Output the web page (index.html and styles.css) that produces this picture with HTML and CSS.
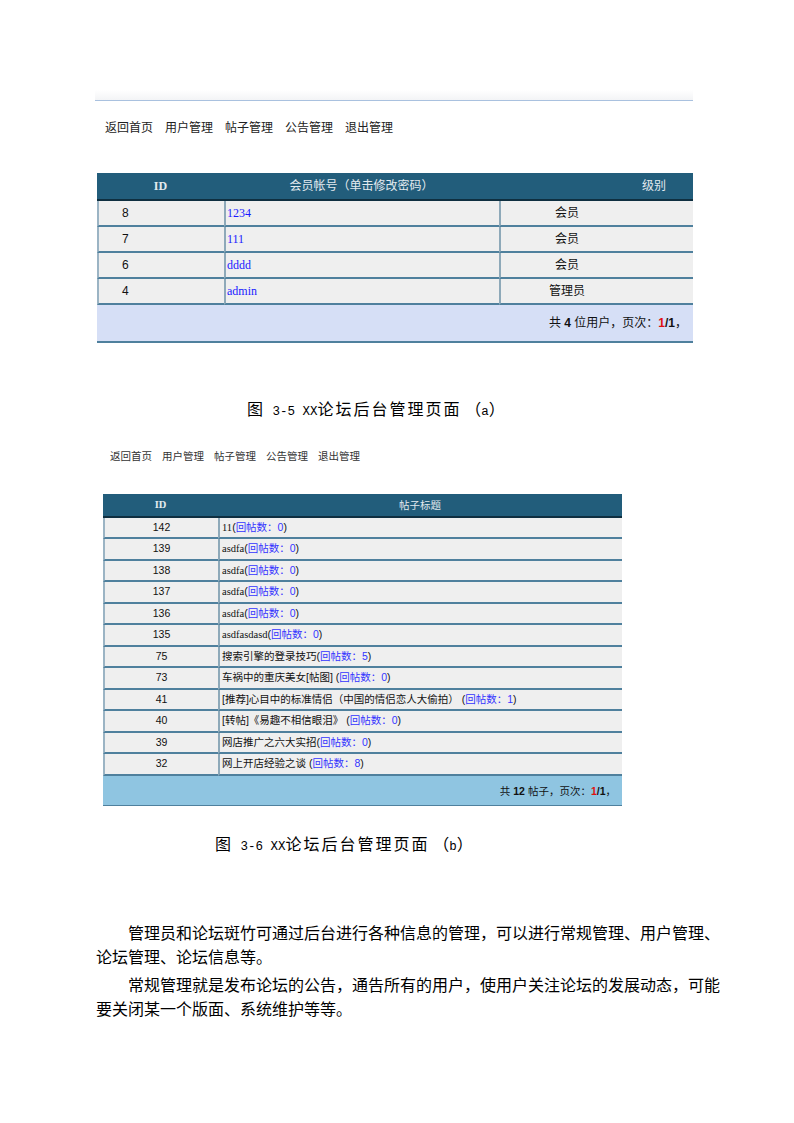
FILE: index.html
```html
<!DOCTYPE html>
<html lang="zh-CN">

<head>
    <meta charset="UTF-8">
    <title>XX论坛后台管理页面</title>
    <link rel="stylesheet" href="styles.css">
</head>

<body>
    <div class="page">
        <div class="topbar"></div>

        <!-- figure a: user list -->
        <div class="nav nav-a">
            <span>返回首页</span><span>用户管理</span><span>帖子管理</span><span>公告管理</span><span>退出管理</span>
        </div>

        <table class="grid users">
            <colgroup><col class="w-id"><col class="w-name"><col class="w-level"></colgroup>
            <thead>
                <tr><th class="id">ID</th><th>会员帐号（单击修改密码）</th><th class="level">级别</th></tr>
            </thead>
            <tbody>
                <tr><td class="id">8</td><td class="name"><a>1234</a></td><td class="level">会员</td></tr>
                <tr><td class="id">7</td><td class="name"><a>111</a></td><td class="level">会员</td></tr>
                <tr><td class="id">6</td><td class="name"><a>dddd</a></td><td class="level">会员</td></tr>
                <tr><td class="id">4</td><td class="name"><a>admin</a></td><td class="level">管理员</td></tr>
            </tbody>
            <tfoot>
                <tr><td colspan="3">共 <b>4</b> 位用户，页次：<b class="cur">1</b><b>/1</b>，</td></tr>
            </tfoot>
        </table>

        <p class="caption caption-a">图<span class="lat"> 3-5 XX</span>论坛后台管理页面<span class="tail"> （<span class="lat">a</span>）</span></p>

        <!-- figure b: post list -->
        <div class="nav nav-b">
            <span>返回首页</span><span>用户管理</span><span>帖子管理</span><span>公告管理</span><span>退出管理</span>
        </div>

        <table class="grid posts">
            <colgroup><col class="w-id"><col class="w-title"></colgroup>
            <thead>
                <tr><th class="id">ID</th><th>帖子标题</th></tr>
            </thead>
            <tbody>
                <tr><td class="id">142</td><td class="title"><span class="en">11</span>(<a>回帖数：0</a>)</td></tr>
                <tr><td class="id">139</td><td class="title"><span class="en">asdfa</span>(<a>回帖数：0</a>)</td></tr>
                <tr><td class="id">138</td><td class="title"><span class="en">asdfa</span>(<a>回帖数：0</a>)</td></tr>
                <tr><td class="id">137</td><td class="title"><span class="en">asdfa</span>(<a>回帖数：0</a>)</td></tr>
                <tr><td class="id">136</td><td class="title"><span class="en">asdfa</span>(<a>回帖数：0</a>)</td></tr>
                <tr><td class="id">135</td><td class="title"><span class="en">asdfasdasd</span>(<a>回帖数：0</a>)</td></tr>
                <tr><td class="id">75</td><td class="title">搜索引擎的登录技巧(<a>回帖数：5</a>)</td></tr>
                <tr><td class="id">73</td><td class="title">车祸中的重庆美女[帖图] (<a>回帖数：0</a>)</td></tr>
                <tr><td class="id">41</td><td class="title">[推荐]心目中的标准情侣（中国的情侣恋人大偷拍） (<a>回帖数：1</a>)</td></tr>
                <tr><td class="id">40</td><td class="title">[转帖]《易趣不相信眼泪》 (<a>回帖数：0</a>)</td></tr>
                <tr><td class="id">39</td><td class="title">网店推广之六大实招(<a>回帖数：0</a>)</td></tr>
                <tr><td class="id">32</td><td class="title">网上开店经验之谈 (<a>回帖数：8</a>)</td></tr>
            </tbody>
            <tfoot>
                <tr><td colspan="2">共 <b>12</b> 帖子，页次：<b class="cur">1</b><b>/1</b>，</td></tr>
            </tfoot>
        </table>

        <p class="caption caption-b">图<span class="lat"> 3-6 XX</span>论坛后台管理页面<span class="tail"> （<span class="lat">b</span>）</span></p>

        <div class="body-text">
            <p>管理员和论坛斑竹可通过后台进行各种信息的管理，可以进行常规管理、用户管理、论坛管理、论坛信息等。</p>
            <p>常规管理就是发布论坛的公告，通告所有的用户，使用户关注论坛的发展动态，可能要关闭某一个版面、系统维护等等。</p>
        </div>
    </div>
</body>

</html>
```

FILE: styles.css
```css
body {
    margin: 0;
    background: #fff;
    color: #000;
    font-family: "Liberation Sans", "Noto Sans CJK SC", sans-serif;
}

.page {
    width: 794px;
    padding-top: 90px;
}

.topbar {
    margin-left: 95px;
    width: 598px;
    height: 10px;
    background: linear-gradient(#fff, #f3f4f6);
    border-bottom: 1px solid #a9c1df;
}

/* top links */
.nav {
    display: flex;
    color: #222;
}

.nav-a {
    margin: 19px 0 0 105px;
    gap: 12px;
    font-size: 12px;
    line-height: 16px;
}

.nav-b {
    margin: 31px 0 0 110px;
    gap: 10px;
    font-size: 10.5px;
    line-height: 14px;
    color: #333;
}

/* tables */
.grid {
    border-collapse: separate;
    border-spacing: 0;
    table-layout: fixed;
    color: #111;
}

.grid th {
    background: #225d7b;
    color: #e2eaef;
    font-weight: normal;
    border-bottom: 2px solid #0f2f40;
}

.grid th.id {
    font-family: "Liberation Serif", serif;
    font-weight: bold;
}

.grid td {
    background: #efefef;
    border-bottom: 2px solid #4f809d;
    padding: 0;
}

.grid td + td {
    border-left: 2px solid #8ea9b9;
}

.grid tbody tr td:first-child {
    border-left: 2px solid #9bb4c4;
}

.grid a {
    color: #1a1aff;
}

.grid b {
    font-weight: bold;
}

.grid b.cur {
    color: #e01010;
}

.users {
    margin: 37px 0 0 97px;
    width: 596px;
    font-size: 12px;
}

.users .w-id { width: 127px; }
.users .w-name { width: 275px; }
.users .w-level { width: 194px; }

.users th {
    line-height: 16px;
    padding: 5px 0 5px;
}

.users th.level {
    text-align: right;
    padding-right: 27px;
}

.users td {
    line-height: 16px;
    padding: 4px 0;
}

.users td.id {
    padding-left: 23px;
}

.users td.name {
    padding-left: 1px;
    font-family: "Liberation Serif", serif;
}

.users td.level {
    text-align: center;
    padding-right: 60px;
}

.users tfoot td {
    background: #d6dff6;
    text-align: right;
    padding: 10px 6px 10px;
}

.posts {
    margin: 31px 0 0 103px;
    width: 519px;
    font-size: 10.5px;
}

.posts .w-id { width: 115px; }
.posts .w-title { width: 404px; }

.posts th {
    line-height: 14px;
    padding: 4px 0 4px;
}

.posts td {
    line-height: 13px;
    padding: 3px 0;
}

.posts tbody tr:nth-child(even) td {
    padding-bottom: 4px;
}

.posts td.id {
    text-align: center;
}

.posts td.title {
    padding-left: 2px;
}

.posts .en {
    font-family: "Liberation Serif", serif;
}

.posts a {
    color: #3434ff;
}

.posts tfoot td {
    background: #8fc5e1;
    text-align: right;
    line-height: 14px;
    padding: 8px 6px 7px;
    border-bottom: 1px solid #4f809d;
}

/* captions and body text */
.caption {
    margin: 0;
    height: 20px;
    font-family: "Noto Sans CJK SC", sans-serif;
    font-size: 16px;
    line-height: 20px;
    letter-spacing: 2px;
}

.caption .lat {
    font-family: "Liberation Mono", monospace;
    font-size: 12.5px;
    letter-spacing: 0;
}

.caption .tail {
    letter-spacing: 0;
}

.caption-a {
    margin: 55px 0 0 247px;
}

.caption-b {
    margin: 27px 0 0 215px;
}

.body-text {
    margin: 67px 0 0 96px;
    width: 624px;
    font-family: "Noto Sans CJK SC", sans-serif;
    font-size: 16px;
    line-height: 24px;
}

.body-text p {
    margin: 0 0 4px;
    text-indent: 32px;
    text-align: justify;
}
```
